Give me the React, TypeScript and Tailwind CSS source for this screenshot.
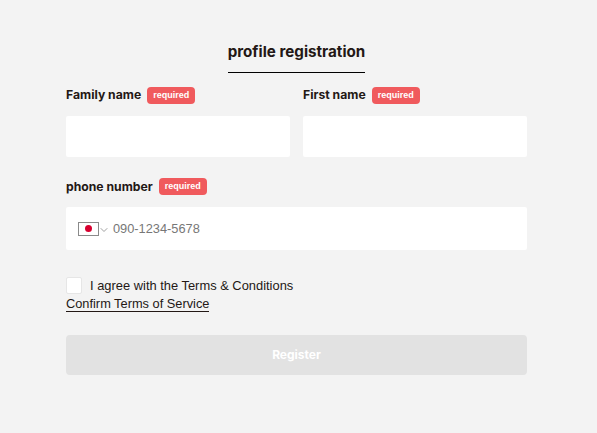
import { ChevronDown } from "lucide-react";

function RequiredBadge() {
  return (
    <span className="flex h-[17px] w-[48px] items-center justify-center rounded-[4px] bg-[#f05a5d] font-['Liberation_Sans',sans-serif] text-[9px] font-bold text-white">
      required
    </span>
  );
}

function FieldLabel({ label, textClass }: { label: string; textClass?: string }) {
  return (
    <div className="flex h-[17px] items-center gap-[6px]">
      <span className={`font-['Inter',sans-serif] text-[12.2px] leading-none font-bold text-[#231815] ${textClass ?? ""}`}>
        {label}
      </span>
      <RequiredBadge />
    </div>
  );
}

function JapanFlag() {
  return (
    <span className="flex h-[14px] w-[21px] items-center justify-center border border-[#8a8a8a] bg-white">
      <span className="h-[7px] w-[7px] rounded-full bg-[#d7002f]" />
    </span>
  );
}

export default function App() {
  return (
    <div className="min-h-[433px] bg-[#f3f3f3] pt-[43px] pr-[70px] pl-[66px] font-['Liberation_Sans',sans-serif] text-[#231815]">
      <div className="flex justify-center">
        <h1 className="h-[30px] border-b border-black font-['Inter',sans-serif] text-[15.2px] leading-[18px] font-bold">
          profile registration
        </h1>
      </div>

      <div className="mt-[14px] grid grid-cols-2 gap-x-[13px]">
        <div>
          <FieldLabel label="Family name" />
          <input className="mt-[12px] block h-[41px] w-full rounded-[2px] bg-white" />
        </div>
        <div>
          <FieldLabel label="First name" />
          <input className="mt-[12px] block h-[41px] w-full rounded-[2px] bg-white" />
        </div>
      </div>

      <div className="mt-[21px]">
        <FieldLabel label="phone number" textClass="mt-[1px]" />
        <div className="mt-[12px] flex h-[43px] items-center rounded-[2px] bg-white pl-[12px]">
          <JapanFlag />
          <ChevronDown className="mt-[2px] -ml-[1px] h-3 w-3 text-[#a0a0a0]" />
          <span className="ml-[3px] text-[12.8px] text-[#777777]">090-1234-5678</span>
        </div>
      </div>

      <div className="mt-[27px]">
        <div className="flex h-[17px] items-center">
          <span className="h-[17px] w-[16px] rounded-[2px] border border-[#e6e6e6] bg-white" />
          <span className="ml-[8px] text-[12.9px] text-[#231815]">I agree with the Terms &amp; Conditions</span>
        </div>
        <a className="mt-[2px] block w-fit border-b border-[#231815] text-[12.8px] leading-[15px]">
          Confirm Terms of Service
        </a>
      </div>

      <button className="mt-[23px] block h-[40px] w-full rounded-[4px] bg-[#e2e2e2] font-['Inter',sans-serif] text-[12px] font-bold text-white">
        Register
      </button>
    </div>
  );
}
